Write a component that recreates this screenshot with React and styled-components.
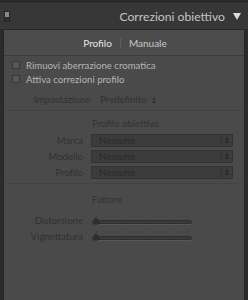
import * as React from 'react'
import styled, { createGlobalStyle } from 'styled-components'

const GlobalStyle = createGlobalStyle`
  html, body {
    margin: 0;
    padding: 0;
    background: #2b2b2b;
  }
  * {
    box-sizing: border-box;
  }
`

const Frame = styled.div`
  width: 248px;
  height: 300px;
  display: flex;
  flex-direction: column;
  background: #2b2b2b;
  font-family: Lato, 'DejaVu Sans', sans-serif;
  overflow: hidden;
`

const TopStrip = styled.div`
  height: 4px;
  background: #2a2a2a;
  border-bottom: 1px solid #3c3c3c;
`

const Header = styled.div`
  height: 25px;
  display: flex;
  align-items: center;
  padding: 0 5px 0 4px;
  background: #373737;
`

const Toggle = styled.div`
  width: 6px;
  height: 11px;
  border-radius: 1px;
  background: linear-gradient(#8a8a8a 0 50%, #2e2e2e 50% 100%);
  border: 1px solid #262626;
`

const Title = styled.div`
  flex: 1;
  text-align: right;
  color: #c4c4c4;
  font-size: 12.2px;
  padding-right: 8px;
`

const Triangle = styled.div`
  width: 0;
  height: 0;
  border-left: 4px solid transparent;
  border-right: 4px solid transparent;
  border-top: 7px solid #dcdcdc;
  margin-right: 2px;
`

const Panel = styled.div`
  flex: 1;
  margin: 0 3px;
  border: 1px solid #262626;
  border-bottom: none;
  background: #4a4a4a;
  display: flex;
  flex-direction: column;
  font-size: 9.6px;
`

const Tabs = styled.div`
  height: 26px;
  display: flex;
  align-items: center;
  justify-content: center;
  gap: 8px;
  background: #4c4c4c;
  border-bottom: 1px solid #3e3e3e;
  font-size: 10px;
  padding-left: 2px;
`

const Tab = styled.span`
  color: ${p => (p.active ? '#e6e6e6' : '#c9c9c9')};
`

const TabDivider = styled.span`
  width: 1px;
  height: 10px;
  background: #5e5e5e;
`

const Section = styled.div`
  border-bottom: ${p => (p.last ? 'none' : '1px solid #434343')};
  padding: ${p => p.pad || '0'};
  display: flex;
  flex-direction: column;
`

const CheckRow = styled.label`
  display: flex;
  align-items: center;
  gap: 6px;
  height: 14px;
  padding-left: 8px;
  color: #b7b7b7;
`

const Box = styled.span`
  width: 8px;
  height: 8px;
  border: 1px solid #383838;
  background: #575757;
`

const SettingRow = styled.div`
  display: flex;
  align-items: center;
  height: 14px;
  margin-top: 6px;
  padding-left: 30px;
  color: #313131;
  gap: 10px;
`

const Spinner = styled.span`
  display: inline-flex;
  flex-direction: column;
  gap: 1px;
  margin-left: 5px;
  vertical-align: middle;
`

const Caret = styled.span`
  width: 0;
  height: 0;
  border-left: 2px solid transparent;
  border-right: 2px solid transparent;
  ${p => (p.up ? 'border-bottom' : 'border-top')}: 3px solid ${p => p.color || '#2f2f2f'};
`

const GroupTitle = styled.div`
  color: #333333;
  padding-left: 88px;
  height: 16px;
  line-height: 16px;
`

const FieldRow = styled.div`
  display: grid;
  grid-template-columns: 79px 142px;
  column-gap: 8px;
  align-items: center;
  height: 16px;
`

const FieldLabel = styled.span`
  text-align: right;
  color: #313131;
`

const Select = styled.div`
  height: 13px;
  display: flex;
  border: 1px solid #333333;
  background: #3c3c3c;
  color: #2a2a2a;
`

const SelectValue = styled.span`
  flex: 1;
  padding-left: 7px;
  line-height: 11px;
`

const SelectArrow = styled.span`
  width: 11px;
  border-left: 1px solid #333333;
  display: flex;
  align-items: center;
  justify-content: center;
`

const SliderRow = styled.div`
  display: grid;
  grid-template-columns: 79px 100px;
  column-gap: 9px;
  align-items: center;
  height: 16px;
  margin-top: ${p => p.offset || 0}px;
`

const Track = styled.div`
  position: relative;
  height: 9px;
`

const TrackLine = styled.div`
  position: absolute;
  left: 4px;
  right: 0;
  bottom: 1px;
  height: 4px;
  border-radius: 2px;
  background: #3a3a3a;
  border: 1px solid #2f2f2f;
  box-shadow: 0 1px 0 #575757;
`

const Ticks = styled.div`
  position: absolute;
  left: 4px;
  right: 4px;
  top: -1px;
  display: flex;
  justify-content: space-between;
`

const Tick = styled.span`
  width: 1px;
  height: 2px;
  background: #3a3a3a;
`

const Thumb = styled.svg`
  position: absolute;
  left: 0;
  top: 1px;
`

function Slider() {
  return (
    <Track>
      <Ticks>
        {Array.from({ length: 9 }).map((_, i) => (
          <Tick key={i} />
        ))}
      </Ticks>
      <TrackLine />
      <Thumb width="8" height="8" viewBox="0 0 8 8">
        <path d="M4 0.3 L6.6 3 Q8 4.3 7.6 6 Q7 7.8 4 7.8 Q1 7.8 0.4 6 Q0 4.3 1.4 3 Z" fill="#2e2e2e" />
      </Thumb>
    </Track>
  )
}

function Field({ label }) {
  return (
    <FieldRow>
      <FieldLabel>{label}</FieldLabel>
      <Select>
        <SelectValue>Nessuna</SelectValue>
        <SelectArrow>
          <Spinner style={{ marginLeft: 0 }}>
            <Caret up color="#2a2a2a" />
            <Caret color="#2a2a2a" />
          </Spinner>
        </SelectArrow>
      </Select>
    </FieldRow>
  )
}

export default function App() {
  return (
    <Frame>
      <GlobalStyle />
      <TopStrip />
      <Header>
        <Toggle />
        <Title>Correzioni obiettivo</Title>
        <Triangle />
      </Header>
      <Panel>
        <Tabs>
          <Tab active>Profilo</Tab>
          <TabDivider />
          <Tab>Manuale</Tab>
        </Tabs>
        <Section pad="2px 0 4px">
          <CheckRow>
            <Box />
            Rimuovi aberrazione cromatica
          </CheckRow>
          <CheckRow>
            <Box />
            Attiva correzioni profilo
          </CheckRow>
          <SettingRow>
            Impostazione
            <span>
              Predefinito
              <Spinner>
                <Caret up />
                <Caret />
              </Spinner>
            </span>
          </SettingRow>
        </Section>
        <Section pad="5px 0 3px">
          <GroupTitle>Profilo obiettivo</GroupTitle>
          <Field label="Marca" />
          <Field label="Modello" />
          <Field label="Profilo" />
        </Section>
        <Section pad="8px 0 0" last>
          <GroupTitle>Fattore</GroupTitle>
          <SliderRow offset={4}>
            <FieldLabel>Distorsione</FieldLabel>
            <Slider />
          </SliderRow>
          <SliderRow>
            <FieldLabel>Vignettatura</FieldLabel>
            <Slider />
          </SliderRow>
        </Section>
      </Panel>
    </Frame>
  )
}
